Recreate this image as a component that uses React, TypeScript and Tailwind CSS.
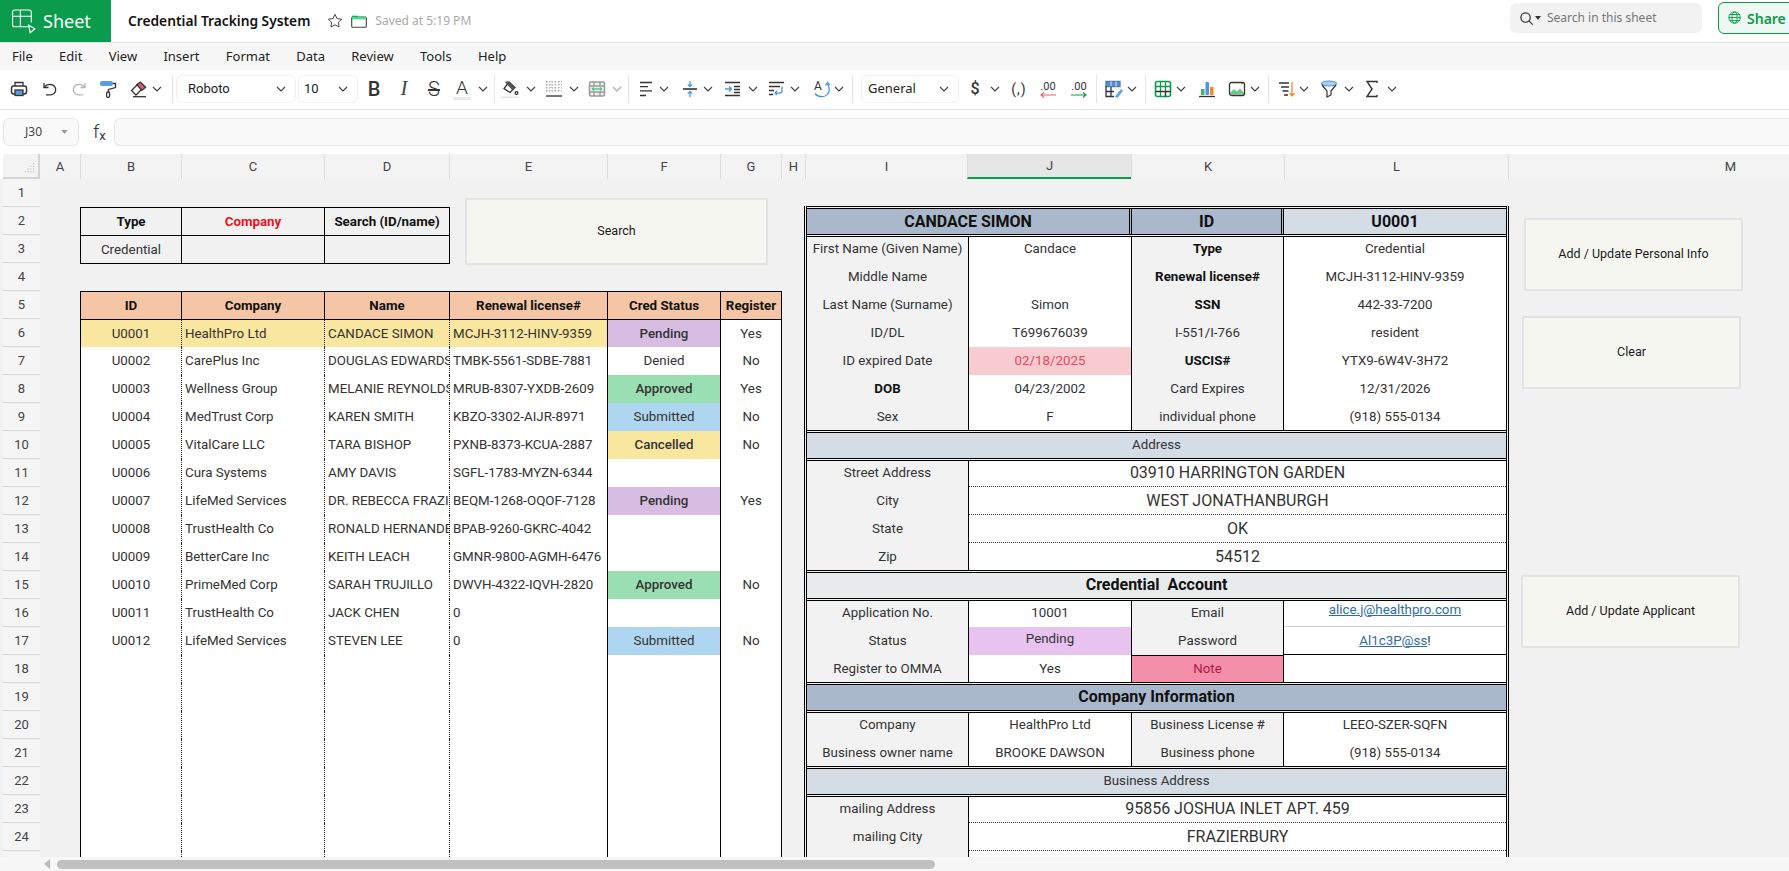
import type { ReactNode } from 'react';

const ROBOTO = "font-['Roboto',sans-serif]";
const UI = "font-['Noto_Sans',sans-serif]";

function Chevron({ ml, faint }: { ml: string; faint?: boolean }) {
  return (
    <svg viewBox="0 0 10 6" className={`${ml} w-[10px] h-[6px] shrink-0`} fill="none" stroke={faint ? '#a8a8a8' : '#444'} strokeWidth="1.2">
      <path d="M1 1l4 4 4-4" />
    </svg>
  );
}

function Sep({ ml }: { ml: string }) {
  return <div className={`${ml} w-px h-[28px] shrink-0 bg-[#e4e4e4]`} />;
}

function Icon({ ml, children }: { ml: string; children: ReactNode }) {
  return (
    <svg viewBox="0 0 18 18" className={`${ml} w-[18px] h-[18px] shrink-0`} fill="none" stroke="#333" strokeWidth="1.3">
      {children}
    </svg>
  );
}

function Select({ className, label, labelClass }: { className: string; label: string; labelClass: string }) {
  return (
    <div className={`${className} h-[28px] shrink-0 flex items-center justify-between border border-[#efefef] rounded-md text-[13px] text-[#222]`}>
      <span className={labelClass}>{label}</span>
      <svg viewBox="0 0 10 6" className="mr-[9px] w-[10px] h-[6px]" fill="none" stroke="#444" strokeWidth="1.2">
        <path d="M1 1l4 4 4-4" />
      </svg>
    </div>
  );
}

function TopBar() {
  return (
    <div className="h-[43px] shrink-0 flex items-stretch border-b border-[#e3e3e3] bg-white relative">
      <div className="w-[111px] bg-[#0a9b4d] flex items-center">
        <svg viewBox="0 0 24 24" className="ml-[11px] w-[25px] h-[25px]" fill="none" stroke="#fff" strokeWidth="1.1">
          <path d="M17 17H3.5a2 2 0 0 1-2-2V3a2 2 0 0 1 2-2h14a2 2 0 0 1 2 2v10" />
          <path d="M1.5 7h18M9 1v16" />
          <path d="M17 15.5l6 3.5-4.6 3.8z" />
        </svg>
        <span className={`${UI} ml-[7px] text-[18px] text-white`}>Sheet</span>
      </div>
      <span className={`${UI} ml-[17px] self-center text-[13.75px] font-semibold text-[#111] whitespace-nowrap`}>Credential Tracking System</span>
      <svg viewBox="0 0 18 18" className="ml-[17px] self-center w-[16px] h-[16px]" fill="none" stroke="#444" strokeWidth="1.1">
        <path d="M9 1.5l2.3 4.8 5.2.7-3.8 3.6.9 5.2L9 13.3l-4.6 2.5.9-5.2L1.5 7l5.2-.7z" />
      </svg>
      <svg viewBox="0 0 16 14" className="ml-[8px] self-center w-[16px] h-[14px]">
        <path d="M1 3V1.5h5L7.5 3H15v2H1z" fill="#3ddc8e" />
        <rect x="0.7" y="3" width="14.6" height="10.3" rx="1" fill="none" stroke="#444" strokeWidth="1.1" />
        <path d="M1 3h14v2.4H1z" fill="#3ddc8e" />
      </svg>
      <span className={`${UI} ml-[8px] self-center text-[12px] text-[#aaa] whitespace-nowrap`}>Saved at 5:19 PM</span>
      <div className="absolute left-[1510px] top-[3px] w-[192px] h-[30px] rounded-md bg-[#f2f2f2] flex items-center">
        <svg viewBox="0 0 16 16" className="ml-[9px] w-[15px] h-[15px]" fill="none" stroke="#333" strokeWidth="1.3">
          <circle cx="7" cy="7" r="5" />
          <path d="M10.6 10.6l4 4" />
        </svg>
        <svg viewBox="0 0 6 4" className="ml-[1px] w-[6px] h-[4px]"><path d="M0 0h6L3 4z" fill="#333" /></svg>
        <span className={`${UI} ml-[6px] text-[12px] text-[#777]`}>Search in this sheet</span>
      </div>
      <div className="absolute left-[1718px] top-[2px] w-[90px] h-[32px] rounded-l-md border border-[#0a9b4d] bg-[#eef8f2] flex items-center">
        <svg viewBox="0 0 16 16" className="ml-[9px] w-[14px] h-[14px]" fill="none" stroke="#0a9b4d" strokeWidth="1.1">
          <circle cx="7.5" cy="7.5" r="6.5" />
          <ellipse cx="7.5" cy="7.5" rx="3" ry="6.5" />
          <path d="M1 7.5h13M2 4h11M2 11h11" />
        </svg>
        <span className={`${UI} ml-[5px] text-[14px] font-semibold text-[#0a9b4d]`}>Share</span>
      </div>
    </div>
  );
}

function MenuBar() {
  const items = ['File', 'Edit', 'View', 'Insert', 'Format', 'Data', 'Review', 'Tools', 'Help'];
  return (
    <div className={`${UI} h-[27px] shrink-0 bg-[#f7f7f7] flex items-center pl-[12px] gap-[26.3px] text-[13px] text-[#222]`}>
      {items.map((m) => (
        <span key={m}>{m}</span>
      ))}
    </div>
  );
}

function Toolbar() {
  return (
    <div className="h-[40px] shrink-0 border-b border-[#e5e5e5] bg-white flex items-center pb-px">
      <Icon ml="ml-[10px]">
        <path d="M5 6V2.5h8V6" />
        <rect x="1.5" y="6" width="15" height="8" rx="2.2" strokeWidth="1.5" />
        <rect x="5" y="10" width="8" height="5.5" fill="#5b9be6" stroke="#333" />
      </Icon>
      <Icon ml="ml-[13px]">
        <path d="M3 3v4.5h4.5" />
        <path d="M3 7.5c2-2.5 4-3.5 6.5-3a5.2 5.2 0 0 1 0 10.4H5" />
      </Icon>
      <Icon ml="ml-[11px]">
        <g stroke="#b5b5b5">
          <path d="M15 3v4.5h-4.5" />
          <path d="M15 7.5c-2-2.5-4-3.5-6.5-3a5.2 5.2 0 0 0 0 10.4H13" />
        </g>
      </Icon>
      <Icon ml="ml-[11px]">
        <rect x="1" y="1" width="13" height="5" rx="2" fill="#5b9be6" stroke="none" />
        <path d="M14 3.5h2.5v4l-7 2V12" />
        <rect x="7.6" y="12" width="3" height="5.4" rx="1.4" />
      </Icon>
      <Icon ml="ml-[13px]">
        <path d="M6 15l-4.5-4.5L8 4l4.500 4.500z" fill="#fff" />
        <path d="M8 3.500L11.500 0.800 16.800 6 13 9.200z" transform="translate(-1.2 1.2)" fill="#dc5a6c" stroke="#333" />
        <path d="M3 16.700h13" />
      </Icon>
      <Chevron ml="ml-[4px]" />
      <Sep ml="ml-[10px]" />
      <Select className={`${ROBOTO} ml-[3px] w-[120px]`} label="Roboto" labelClass="ml-[11px]" />
      <Select className={`${ROBOTO} ml-[2px] w-[60px]`} label="10" labelClass="ml-[5px]" />
      <span className={`${ROBOTO} ml-[7px] w-[18px] shrink-0 text-center text-[20px] font-medium text-[#333]`}>B</span>
      <span className="ml-[12px] w-[18px] shrink-0 text-center font-['Liberation_Serif',serif] italic text-[21px] text-[#444]">I</span>
      <span className={`${ROBOTO} ml-[12px] w-[18px] shrink-0 text-center text-[20px] font-light text-[#333] line-through`}>S</span>
      <div className="ml-[10px] w-[18px] shrink-0 flex flex-col items-center">
        <span className={`${ROBOTO} text-[19px] font-light leading-[19px] text-[#333]`}>A</span>
        <div className="w-[18px] h-[3px] bg-[#e9e9e9]" />
      </div>
      <Chevron ml="ml-[7px]" />
      <Sep ml="ml-[6px]" />
      <Icon ml="ml-[6px]">
        <path d="M8 2l6 5.500-5 5L3 8.500z" fill="#fff" />
        <path d="M4.200 2.500l2-1.600 7.700 6.300-2.800 2.800z" fill="#555" stroke="none" />
        <circle cx="15.500" cy="13" r="1.400" />
        <path d="M0 17.500h18" stroke="#e4e4e4" strokeWidth="2" />
      </Icon>
      <Chevron ml="ml-[7px]" />
      <Icon ml="ml-[9px]">
        <path d="M1 2h16M1 5h16M1 8h16M1 11h16M2 1v12M6 1v12M10 1v12M14 1v12" stroke="#8d8d8d" strokeDasharray="1 2" strokeWidth="1" />
        <path d="M1 16h16" strokeWidth="1.600" stroke="#555" />
      </Icon>
      <Chevron ml="ml-[6px]" />
      <Icon ml="ml-[9px]">
        <rect x="1.500" y="2" width="15" height="14" rx="1.500" stroke="#999" fill="#f0f0f0" strokeWidth="1.500" />
        <path d="M1.500 6h15M1.500 12h15M6 2v4M12 2v4M6 12v4M12 12v4" stroke="#999" />
        <path d="M4 9h10M4 9l2-1.500M4 9l2 1.500M14 9l-2-1.500M14 9l-2 1.500" stroke="#5cc28e" />
      </Icon>
      <Chevron ml="ml-[6px]" faint />
      <Sep ml="ml-[6px]" />
      <Icon ml="ml-[9px]">
        <path d="M2 2.500h12M2 6.700h8M2 10.900h12M2 15.500h6" />
      </Icon>
      <Chevron ml="ml-[3px]" />
      <Icon ml="ml-[12px]">
        <path d="M2 9h14" strokeWidth="1.600" />
        <path d="M9 1v5M6.800 4.400L9 6.600l2.200-2.200M9 17v-5M6.800 13.600L9 11.400l2.200 2.200" stroke="#4d94e8" />
      </Icon>
      <Chevron ml="ml-[4px]" />
      <Icon ml="ml-[11px]">
        <path d="M1 2.500h15M1 15.500h15M10 6.500h6M10 9.500h6M10 12.500h6" />
        <path d="M1 9h6M5 6.500L7.500 9 5 11.500" stroke="#4d94e8" />
      </Icon>
      <Chevron ml="ml-[6px]" />
      <Icon ml="ml-[10px]">
        <path d="M1 2.500h15M1 6.500h11M1 10.500h5M1 14.500h4" />
        <path d="M14 6.500v4a2.600 2.600 0 0 1-2.600 2.600H7M9 11l-2 2 2 2" stroke="#4d94e8" />
      </Icon>
      <Chevron ml="ml-[4px]" />
      <div className="ml-[14px] w-[18px] h-[18px] shrink-0 relative">
        <span className={`${ROBOTO} absolute left-0 -top-[1px] text-[12px] leading-[14px] text-[#333]`}>A</span>
        <svg viewBox="0 0 18 18" className="absolute inset-0 w-[18px] h-[18px]" fill="none">
          <path d="M1 13.500c3 4 10 4.500 13 0 1.500-2.200 1.500-6-.5-9.500M11.500 5.500l2-3 2.500 2.500" stroke="#4d94e8" strokeWidth="1.300" />
        </svg>
      </div>
      <Chevron ml="ml-[2px]" />
      <Sep ml="ml-[8px]" />
      <Select className={`${UI} ml-[8px] w-[98px]`} label="General" labelClass="ml-[6px]" />
      <span className={`${ROBOTO} ml-[7px] w-[18px] shrink-0 text-center text-[16px] font-medium text-[#333]`}>$</span>
      <Chevron ml="ml-[6px]" />
      <span className={`${ROBOTO} ml-[10px] w-[18px] shrink-0 text-center text-[14px] tracking-[1px] text-[#333] whitespace-nowrap`}>(,)</span>
      <div className="ml-[11px] w-[18px] shrink-0 flex flex-col items-center">
        <span className={`${ROBOTO} text-[11px] leading-[11px] text-[#333]`}>.00</span>
        <svg viewBox="0 0 16 6" className="w-[16px] h-[6px]" fill="none" stroke="#e0606c" strokeWidth="1.100"><path d="M16 3H1M4 0.500L1 3l3 2.500" /></svg>
      </div>
      <div className="ml-[13px] w-[18px] shrink-0 flex flex-col items-center">
        <span className={`${ROBOTO} text-[11px] leading-[11px] text-[#333]`}>.00</span>
        <svg viewBox="0 0 16 6" className="w-[16px] h-[6px]" fill="none" stroke="#0a9b4d" strokeWidth="1.100"><path d="M0 3h15M12 0.500L15 3l-3 2.500" /></svg>
      </div>
      <Sep ml="ml-[8px]" />
      <Icon ml="ml-[8px]">
        <path d="M1 1.500h14v5H1z" fill="#5b8ec6" stroke="#4a7db5" />
        <path d="M1 6v10.500h8M1 11.500h8M6 6v10.500" />
        <path d="M6 1.500v5M11 1.500v5" stroke="#fff" strokeWidth="0.800" />
        <path d="M10.500 16.500l5.500-7 1.500 1.200-5 6.800z" fill="#6aa8ec" stroke="#4d94e8" strokeWidth="0.800" />
      </Icon>
      <Chevron ml="ml-[4px]" />
      <Sep ml="ml-[8px]" />
      <Icon ml="ml-[8px]">
        <rect x="1.500" y="1.500" width="15" height="15" rx="2" stroke="#0a9b4d" strokeWidth="1.600" />
        <path d="M1.500 6.500h15M6.500 1.500v15M11.500 1.500v15" stroke="#0a9b4d" />
        <path d="M1.500 11.500h15M11.500 11.500v5" stroke="#333" />
      </Icon>
      <Chevron ml="ml-[4px]" />
      <svg viewBox="0 0 18 18" className="ml-[12px] w-[18px] h-[18px] shrink-0">
        <rect x="3" y="9" width="3.500" height="6" fill="#3db46d" />
        <rect x="7.500" y="2" width="3.500" height="13" rx="1" fill="#4d94e8" />
        <rect x="12" y="7" width="3.500" height="8" fill="#f08a24" />
        <path d="M1 16.500h16" stroke="#333" strokeWidth="1.300" />
      </svg>
      <svg viewBox="0 0 18 18" className="ml-[12px] w-[18px] h-[18px] shrink-0">
        <path d="M2 13l4-4 3 2.500 3-3 4 4.500v1.500H2z" fill="#6cc487" />
        <path d="M13 3.500h2M14 2.500v2" stroke="#f0a020" strokeWidth="1" />
        <rect x="1.500" y="2.500" width="15" height="13" rx="2" fill="none" stroke="#333" strokeWidth="1.300" />
      </svg>
      <Chevron ml="ml-[4px]" />
      <Sep ml="ml-[8px]" />
      <Icon ml="ml-[9px]">
        <path d="M1 3h10M3 7h8M4.500 11h6M6 15h4" />
        <path d="M14 2v14M11.500 13l2.500 3 2.500-3" stroke="#f08a24" />
      </Icon>
      <Chevron ml="ml-[3px]" />
      <svg viewBox="0 0 18 18" className="ml-[11px] w-[18px] h-[18px] shrink-0">
        <ellipse cx="9" cy="3.500" rx="7.500" ry="2.500" fill="#a8d0f5" stroke="#4d94e8" strokeWidth="1.200" />
        <path d="M2 5l5 6v6l4-2v-4l5-6" fill="none" stroke="#333" strokeWidth="1.200" />
      </svg>
      <Chevron ml="ml-[6px]" />
      <Icon ml="ml-[9px]">
        <path d="M14 3V1.500H4L9 9l-5 7.500h10V15" strokeWidth="1.400" />
      </Icon>
      <Chevron ml="ml-[6px]" />
    </div>
  );
}

function FormulaBar() {
  return (
    <div className="h-[44px] shrink-0 bg-white flex items-start pt-[8px]">
      <div className={`${UI} ml-[3px] w-[76px] h-[28px] shrink-0 flex items-center border border-[#e6e6e6] rounded-md bg-[#f9f9f9] text-[12px] text-[#444]`}>
        <span className="ml-[21px]">J30</span>
        <svg viewBox="0 0 8 5" className="ml-[19px] w-[7px] h-[4px]"><path d="M0 0h8L4 5z" fill="#999" /></svg>
      </div>
      <div className="ml-[14px] w-[21px] h-[28px] shrink-0 flex items-center text-[#333]">
        <span className={`${ROBOTO} text-[19px] font-light`}>f</span>
        <span className={`${ROBOTO} text-[13px] mt-[7px]`}>x</span>
      </div>
      <div className="w-[1700px] h-[28px] shrink-0 border border-r-0 border-[#e6e6e6] rounded-l-md bg-[#f9f9f9]" />
    </div>
  );
}

function ColumnHeaders() {
  const cols: [string, string][] = [
    ['A', 'w-[40px]'],
    ['B', 'w-[101px]'],
    ['C', 'w-[143px]'],
    ['D', 'w-[125px]'],
    ['E', 'w-[158px]'],
    ['F', 'w-[113px]'],
    ['G', 'w-[61px]'],
    ['H', 'w-[24px]'],
    ['I', 'w-[162px]'],
    ['J', 'w-[164px]'],
    ['K', 'w-[153px]'],
    ['L', 'w-[224px]'],
    ['M', 'w-[444px]'],
  ];
  return (
    <div className={`${ROBOTO} h-[25px] shrink-0 flex border-t border-[#dcdcdc] text-[13px] text-[#444] pl-[3px] -mt-px box-content`}>
      <div className="w-[37px] shrink-0 bg-[#f3f3f3] border-r-2 border-b-2 border-[#d4d4d4] flex items-end justify-end">
        <svg viewBox="0 0 12 12" className="mr-[3px] mb-[3px] w-[11px] h-[11px]" fill="#aaa">
          <path d="M10 0h1v1h-1zM7 3h1v1H7zM10 3h1v1h-1zM4 6h1v1H4zM7 6h1v1H7zM10 6h1v1h-1zM1 9h1v1H1zM4 9h1v1H4zM7 9h1v1H7zM10 9h1v1h-1z" />
        </svg>
      </div>
      {cols.map(([name, w]) => (
        <div
          key={name}
          className={`${w} shrink-0 flex items-center justify-center ${name === 'A' ? '' : 'border-l border-[#dcdcdc]'} ${
            name === 'J' ? 'bg-[#e6e6e6] border-b-2 border-b-[#0a9b4d]' : 'bg-[#f3f3f3]'
          }`}
        >
          {name}
        </div>
      ))}
    </div>
  );
}

function RowHeaders() {
  const rows = Array.from({ length: 25 }, (_, i) => i + 1);
  return (
    <div className={`${ROBOTO} ml-[3px] w-[37px] shrink-0 bg-[#f5f5f5] text-[13px] text-[#444]`}>
      {rows.map((n) => (
        <div key={n} className="h-[28px] flex items-center justify-center border-b border-[#d6d6d6]">
          {n}
        </div>
      ))}
    </div>
  );
}

type Applicant = { id: string; company: string; name: string; lic: string; status?: string; reg?: string };

const applicants: Applicant[] = [
  { id: 'U0001', company: 'HealthPro Ltd', name: 'CANDACE SIMON', lic: 'MCJH-3112-HINV-9359', status: 'Pending', reg: 'Yes' },
  { id: 'U0002', company: 'CarePlus Inc', name: 'DOUGLAS EDWARDS', lic: 'TMBK-5561-SDBE-7881', status: 'Denied', reg: 'No' },
  { id: 'U0003', company: 'Wellness Group', name: 'MELANIE REYNOLDS', lic: 'MRUB-8307-YXDB-2609', status: 'Approved', reg: 'Yes' },
  { id: 'U0004', company: 'MedTrust Corp', name: 'KAREN SMITH', lic: 'KBZO-3302-AIJR-8971', status: 'Submitted', reg: 'No' },
  { id: 'U0005', company: 'VitalCare LLC', name: 'TARA BISHOP', lic: 'PXNB-8373-KCUA-2887', status: 'Cancelled', reg: 'No' },
  { id: 'U0006', company: 'Cura Systems', name: 'AMY DAVIS', lic: 'SGFL-1783-MYZN-6344' },
  { id: 'U0007', company: 'LifeMed Services', name: 'DR. REBECCA FRAZIER', lic: 'BEQM-1268-OQOF-7128', status: 'Pending', reg: 'Yes' },
  { id: 'U0008', company: 'TrustHealth Co', name: 'RONALD HERNANDEZ', lic: 'BPAB-9260-GKRC-4042' },
  { id: 'U0009', company: 'BetterCare Inc', name: 'KEITH LEACH', lic: 'GMNR-9800-AGMH-6476' },
  { id: 'U0010', company: 'PrimeMed Corp', name: 'SARAH TRUJILLO', lic: 'DWVH-4322-IQVH-2820', status: 'Approved', reg: 'No' },
  { id: 'U0011', company: 'TrustHealth Co', name: 'JACK CHEN', lic: '0' },
  { id: 'U0012', company: 'LifeMed Services', name: 'STEVEN LEE', lic: '0', status: 'Submitted', reg: 'No' },
];

const statusClass: Record<string, string> = {
  Pending: 'bg-[#d7bde2] font-medium',
  Denied: '',
  Approved: 'bg-[#9adfb1] font-medium',
  Submitted: 'bg-[#aed6f1]',
  Cancelled: 'bg-[#f9e79f] font-medium',
};

function ListTable() {
  const blank = Array.from({ length: 8 });
  const row = (a: Applicant | null, i: number) => (
    <div key={i} className={`${i === 0 ? 'h-[27px] bg-[#f9e79f]' : 'h-[28px] bg-white'} flex`}>
      <div className="w-[101px] shrink-0 border-l border-black flex items-center justify-center">{a?.id}</div>
      <div className="w-[143px] shrink-0 border-l border-dotted border-[#222] flex items-center pl-[3px] overflow-hidden whitespace-nowrap">{a?.company}</div>
      <div className="w-[125px] shrink-0 border-l border-dotted border-[#222] flex items-center pl-[3px] overflow-hidden whitespace-nowrap">{a?.name}</div>
      <div className="w-[158px] shrink-0 border-l border-dotted border-[#222] flex items-center pl-[3px] overflow-hidden whitespace-nowrap">{a?.lic}</div>
      <div className={`w-[113px] shrink-0 border-l border-black flex items-center justify-center ${a?.status ? statusClass[a.status] : ''}`}>{a?.status}</div>
      <div className="w-[62px] shrink-0 border-x border-black bg-white flex items-center justify-center">{a?.reg}</div>
    </div>
  );
  return (
    <div className="w-[702px] text-[#333]">
      <div className="h-[29px] flex bg-[#f5c6a5] border-y border-black font-bold text-[#111]">
        <div className="w-[101px] shrink-0 border-l border-black flex items-center justify-center">ID</div>
        <div className="w-[143px] shrink-0 border-l border-black flex items-center justify-center">Company</div>
        <div className="w-[125px] shrink-0 border-l border-black flex items-center justify-center">Name</div>
        <div className="w-[158px] shrink-0 border-l border-black flex items-center justify-center">Renewal license#</div>
        <div className="w-[113px] shrink-0 border-l border-black flex items-center justify-center">Cred Status</div>
        <div className="w-[62px] shrink-0 border-x border-black flex items-center justify-center">Register</div>
      </div>
      {applicants.map((a, i) => row(a, i))}
      {blank.map((_, i) => row(null, i + 12))}
    </div>
  );
}

function FilterTable() {
  return (
    <div className="w-[370px] text-[#222]">
      <div className="h-[28px] flex border-t border-black font-bold text-[#111]">
        <div className="w-[101px] shrink-0 border-l border-black flex items-center justify-center">Type</div>
        <div className="w-[143px] shrink-0 border-l border-black flex items-center justify-center text-[#e8141c]">Company</div>
        <div className="w-[126px] shrink-0 border-x border-black flex items-center justify-center whitespace-nowrap">Search (ID/name)</div>
      </div>
      <div className="h-[29px] flex border-y border-black">
        <div className="w-[101px] shrink-0 border-l border-black flex items-center justify-center text-[#333]">Credential</div>
        <div className="w-[143px] shrink-0 border-l border-black" />
        <div className="w-[126px] shrink-0 border-x border-black" />
      </div>
    </div>
  );
}

// the double rule eats into the first row of each block, so its text sits a pixel higher
function rowH(i: number, n: number) {
  if (n === 1) return 'h-[25px]';
  if (i === 0) return 'h-[26px] *:pb-[2px]';
  if (i === n - 1) return 'h-[27px]';
  return 'h-[28px]';
}

const GREY = 'bg-[#f2f2f2]';
const WHITE = 'bg-white';

function Cell({ w, bg, bold, className, children }: { w: string; bg: string; bold?: boolean; className?: string; children?: ReactNode }) {
  return (
    <div className={`${w} ${bg} shrink-0 flex items-center justify-center border-r border-black whitespace-nowrap ${bold ? 'font-bold text-[#111]' : ''} ${className ?? ''}`}>
      {children}
    </div>
  );
}

function Section({ n, children }: { n: number; children: (h: (i: number) => string) => ReactNode }) {
  return <div className="border-t-[3px] border-double border-black">{children((i) => `${rowH(i, n)} flex`)}</div>;
}

function Banner({ bg, className, children }: { bg: string; className: string; children: ReactNode }) {
  return (
    <Section n={1}>
      {(h) => <div className={`${h(0)} ${bg} ${className} flex items-center justify-center whitespace-pre pb-[2px]`}>{children}</div>}
    </Section>
  );
}

function FourCols({ rows }: { rows: { a: string; b?: string; c: string; d?: ReactNode; aBold?: boolean; cBold?: boolean; bClass?: string; cClass?: string; dClass?: string; }[] }) {
  return (
    <Section n={rows.length}>
      {(h) =>
        rows.map((r, i) => (
          <div key={r.a} className={h(i)}>
            <Cell w="w-[162px]" bg={GREY} bold={r.aBold}>{r.a}</Cell>
            <Cell w="w-[163px]" bg={WHITE} className={r.bClass}>{r.b}</Cell>
            <Cell w="w-[152px]" bg={GREY} bold={r.cBold} className={r.cClass}>{r.c}</Cell>
            <div className={`w-[222px] shrink-0 bg-white flex items-center justify-center ${r.dClass ?? ''}`}>{r.d}</div>
          </div>
        ))
      }
    </Section>
  );
}

function AddressBlock({ rows }: { rows: [string, string][] }) {
  return (
    <Section n={rows.length}>
      {(h) =>
        rows.map(([label, value], i) => (
          <div key={label} className={h(i)}>
            <Cell w="w-[162px]" bg={GREY}>{label}</Cell>
            <div className={`w-[537px] shrink-0 bg-white flex items-center justify-center text-[16px] ${i < rows.length - 1 ? 'border-b border-dotted border-[#444]' : ''}`}>{value}</div>
          </div>
        ))
      }
    </Section>
  );
}

function DetailPanel() {
  const HEAD = 'text-[16px] font-bold text-[#111]';
  const SUB = 'bg-[#d4dce6]';
  const BLUE = 'bg-[#a9b8cb]';
  return (
    <div className="-ml-px w-[705px] border-x-[3px] border-double border-black text-[#333]">
      <Section n={1}>
        {(h) => (
          <div className={`${h(0)} ${HEAD}`}>
            <div className={`w-[325px] shrink-0 ${BLUE} border-r-[3px] border-double border-black flex items-center justify-center`}>CANDACE SIMON</div>
            <div className={`w-[152px] shrink-0 ${BLUE} border-r-[3px] border-double border-black flex items-center justify-center`}>ID</div>
            <div className={`w-[222px] shrink-0 ${SUB} flex items-center justify-center`}>U0001</div>
          </div>
        )}
      </Section>
      <FourCols
        rows={[
          { a: 'First Name (Given Name)', b: 'Candace', c: 'Type', cBold: true, d: 'Credential' },
          { a: 'Middle Name', c: 'Renewal license#', cBold: true, d: 'MCJH-3112-HINV-9359' },
          { a: 'Last Name (Surname)', b: 'Simon', c: 'SSN', cBold: true, d: '442-33-7200' },
          { a: 'ID/DL', b: 'T699676039', c: 'I-551/I-766', d: 'resident' },
          { a: 'ID expired Date', b: '02/18/2025', bClass: '!bg-[#f7cbcf] text-[#e84a5f]', c: 'USCIS#', cBold: true, d: 'YTX9-6W4V-3H72' },
          { a: 'DOB', aBold: true, b: '04/23/2002', c: 'Card Expires', d: '12/31/2026' },
          { a: 'Sex', b: 'F', c: 'individual phone', d: '(918) 555-0134' },
        ]}
      />
      <Banner bg={SUB} className="">Address</Banner>
      <AddressBlock
        rows={[
          ['Street Address', '03910 HARRINGTON GARDEN'],
          ['City', 'WEST JONATHANBURGH'],
          ['State', 'OK'],
          ['Zip', '54512'],
        ]}
      />
      <Banner bg="bg-[#e8ebec]" className="text-[16px] font-bold text-[#111]">Credential  Account</Banner>
      <FourCols
        rows={[
          {
            a: 'Application No.',
            b: '10001',
            c: 'Email',
            d: <span className="text-[#2e6da4] underline -mt-[6px]">alice.j@healthpro.com</span>,
            dClass: 'border-b border-[#cfcfcf]',
          },
          {
            a: 'Status',
            b: 'Pending',
            bClass: '!bg-[#e8c3ef] pb-[4px]',
            c: 'Password',
            d: (
              <span>
                <span className="text-[#2e6da4] underline">Al1c3P@ss</span>!
              </span>
            ),
            dClass: 'border-b border-black',
          },
          { a: 'Register to OMMA', b: 'Yes', c: 'Note', cClass: '!bg-[#f48fa9] text-[#b0183f] border-t border-t-black' },
        ]}
      />
      <Banner bg={BLUE} className="text-[16px] font-bold text-[#111]">Company Information</Banner>
      <FourCols
        rows={[
          { a: 'Company', b: 'HealthPro Ltd', c: 'Business License #', d: 'LEEO-SZER-SQFN' },
          { a: 'Business owner name', b: 'BROOKE DAWSON', c: 'Business phone', d: '(918) 555-0134' },
        ]}
      />
      <Banner bg={SUB} className="">Business Address</Banner>
      <AddressBlock
        rows={[
          ['mailing Address', '95856 JOSHUA INLET APT. 459'],
          ['mailing City', 'FRAZIERBURY'],
          ['mailing State', ''],
        ]}
      />
    </div>
  );
}

function SheetButton({ className, label }: { className: string; label: string }) {
  return (
    <div className={`absolute ${className} bg-[#f6f6f1] border-2 border-[#e3e3e3] flex items-center justify-center text-[12.5px] text-[#1a1a1a]`}>
      {label}
    </div>
  );
}

function ScrollBar() {
  return (
    <div className="h-[14px] shrink-0 bg-[#f7f7f7] flex items-center">
      <svg viewBox="0 0 6 10" className="ml-[44px] w-[6px] h-[10px]"><path d="M6 0v10L0 5z" fill="#bbb" /></svg>
      <div className="ml-[7px] w-[878px] h-[9px] rounded-full bg-[#c0c0c0]" />
    </div>
  );
}

export default function App() {
  return (
    <div className={`${ROBOTO} h-screen w-full overflow-hidden flex flex-col bg-white text-[13.33px]`}>
      <TopBar />
      <MenuBar />
      <Toolbar />
      <FormulaBar />
      <div className="flex-1 min-h-0 overflow-hidden flex flex-col">
        <ColumnHeaders />
        <div className="relative flex bg-[#f1f1f1] flex-1">
          <RowHeaders />
          <div className="w-[765px] shrink-0 pl-[40px]">
            <div className="h-[28px]" />
            <FilterTable />
            <div className="h-[27px]" />
            <ListTable />
          </div>
          <div className="pt-[27px]">
            <DetailPanel />
          </div>
          <SheetButton className="left-[465px] top-[19px] w-[303px] h-[67px]" label="Search" />
          <SheetButton className="left-[1524px] top-[39px] w-[219px] h-[73px]" label="Add / Update Personal Info" />
          <SheetButton className="left-[1522px] top-[137px] w-[219px] h-[73px]" label="Clear" />
          <SheetButton className="left-[1521px] top-[396px] w-[219px] h-[73px]" label="Add / Update Applicant" />
        </div>
      </div>
      <ScrollBar />
    </div>
  );
}
